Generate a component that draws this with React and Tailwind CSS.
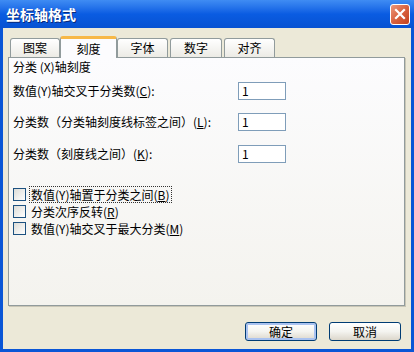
import React from "react";

const font = { fontFamily: '"Noto Sans CJK SC", "Noto Sans", sans-serif' };

const tabs = [
  { label: "图案", w: "w-[50px]" },
  { label: "刻度", w: "w-[57px]", active: true },
  { label: "字体", w: "w-[51px]" },
  { label: "数字", w: "w-[52px] ml-[2px]" },
  { label: "对齐", w: "w-[51px] ml-[2px]" },
];

function Tab({ tab }) {
  if (tab.active) {
    return (
      <div
        className={`${tab.w} relative z-10 -mb-px h-[22px] rounded-t-[3px] border-x border-[#919b9c] border-t-[3px] border-t-[#f7b847] bg-[#fcfcfe] flex items-center justify-center text-[12px] leading-[16px] text-black`}
      >
        {tab.label}
      </div>
    );
  }
  return (
    <div
      className={`${tab.w} h-[19px] rounded-t-[3px] border border-b-0 border-[#919b9c] bg-linear-to-b from-white to-[#ecebe5] flex items-center justify-center text-[12px] leading-[16px] text-black`}
    >
      {tab.label}
    </div>
  );
}

function NumberRow({ children, className }) {
  return (
    <div className={`flex items-center h-[18px] ${className}`}>
      <div className="w-[225px] text-[12px] leading-[16px] whitespace-nowrap">{children}</div>
      <div className="w-[48px] h-[18px] border border-[#7f9db9] bg-white pl-[3px] text-[12px] leading-[16px] flex items-center">
        1
      </div>
    </div>
  );
}

function CheckRow({ children, focused }) {
  return (
    <div className="flex items-center h-[17px]">
      <div className="w-[13px] h-[13px] border border-[#1c5180] bg-linear-to-br from-[#dcdcd7] to-white" />
      <div
        className={`ml-[3px] px-[1px] text-[12px] leading-[15px] whitespace-nowrap border border-dotted ${
          focused ? "border-[#333]" : "border-transparent"
        }`}
      >
        {children}
      </div>
    </div>
  );
}

function XpButton({ children, isDefault }) {
  return (
    <div
      className={`w-[72px] h-[19px] rounded-[3px] border border-[#003c74] bg-linear-to-b from-white via-[#f4f4f0] to-[#dcd7cb] flex items-center justify-center text-[12px] leading-[15px] ${
        isDefault ? "shadow-[inset_0_0_0_2px_#a9c2f0]" : ""
      }`}
    >
      {children}
    </div>
  );
}

export default function App() {
  return (
    <div style={font} className="w-[414px] h-[352px] bg-[#0a56d6] flex flex-col text-black overflow-hidden">
      {/* title bar */}
      <div className="h-[28px] shrink-0 flex items-center justify-between pl-[6px] pr-[4px] bg-linear-to-b from-[#3f8cf3] via-[#0a5ce2] to-[#0752d2]">
        <span className="text-white font-bold text-[14px] leading-[18px] [text-shadow:1px_1px_#0a2a7a]">
          坐标轴格式
        </span>
        <div className="w-[20px] h-[21px] rounded-[3px] border border-white bg-linear-to-br from-[#eb967a] via-[#d9623f] to-[#c2401d] flex items-center justify-center">
          <svg width="12" height="12" viewBox="0 0 12 12">
            <path d="M2 2 L10 10 M10 2 L2 10" stroke="white" strokeWidth="2.2" strokeLinecap="square" />
          </svg>
        </div>
      </div>

      {/* body */}
      <div className="flex-1 mx-[3px] mb-[3px] bg-[#ece9d8] px-[5px] pt-[8px] flex flex-col">
        <div className="flex items-end h-[21px] pl-[2px]">
          {tabs.map((t) => (
            <Tab key={t.label} tab={t} />
          ))}
        </div>

        <div className="w-[397px] h-[249px] border border-[#919b9c] shadow-[1px_1px_0_0_#c9c6b6] bg-linear-to-b from-[#fcfcfe] to-[#f4f3ee] pl-[4px] pt-px flex flex-col">
          <div className="h-[16px] text-[12px] leading-[16px]">分类 (X)轴刻度</div>

          <NumberRow className="mt-[7px]">
            数值(Y)轴交叉于分类数(<u>C</u>):
          </NumberRow>
          <NumberRow className="mt-[13px]">
            分类数（分类轴刻度线标签之间）(<u>L</u>):
          </NumberRow>
          <NumberRow className="mt-[14px]">
            分类数（刻度线之间）(<u>K</u>):
          </NumberRow>

          <div className="mt-[23px] flex flex-col">
            <CheckRow focused>
              数值(Y)轴置于分类之间(<u>B</u>)
            </CheckRow>
            <CheckRow>
              分类次序反转(<u>R</u>)
            </CheckRow>
            <CheckRow>
              数值(Y)轴交叉于最大分类(<u>M</u>)
            </CheckRow>
          </div>
        </div>

        <div className="mt-[16px] flex justify-end gap-[12px] pr-[5px]">
          <XpButton isDefault>确定</XpButton>
          <XpButton>取消</XpButton>
        </div>
      </div>
    </div>
  );
}
